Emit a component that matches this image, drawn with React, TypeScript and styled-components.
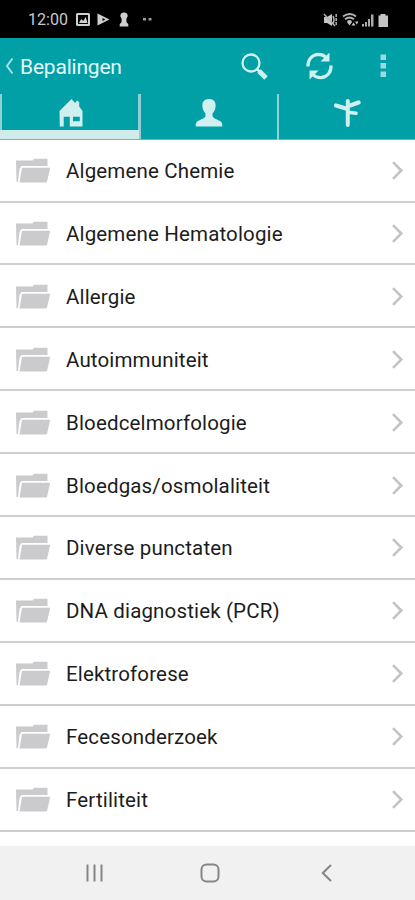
import React from 'react';
import styled, { createGlobalStyle, css } from 'styled-components';

const GlobalStyle = createGlobalStyle`
  * { box-sizing: border-box; }
  body { margin: 0; background: #fff; font-family: Roboto, sans-serif; }
`;

const TEAL = '#00a0a6';
const PALE = '#d0f0f0';
const DIVIDER = '#8fd0d2';

const Screen = styled.div`
  width: 415px;
  height: 900px;
  display: flex;
  flex-direction: column;
  overflow: hidden;
  background: #fff;
`;

const StatusBar = styled.header`
  height: 38px;
  flex: none;
  display: flex;
  align-items: center;
  justify-content: space-between;
  padding: 2px 26px 0 28px;
  background: #000;
  color: #c9c9c9;
`;

const Clock = styled.span`
  width: 48px;
  font-size: 16px;
  letter-spacing: 0.05px;
  line-height: 20px;
`;

const StatusGroup = styled.div`
  display: flex;
  align-items: center;
`;

const Glyph = styled.svg`
  display: block;
  flex: none;
  overflow: visible;
`;

const TitleBar = styled.div`
  height: 56px;
  flex: none;
  display: flex;
  align-items: center;
  padding: 0 28px 0 5px;
  background: ${TEAL};
`;

const Title = styled.h1`
  flex: 1;
  margin: 0 0 0 6px;
  padding-top: 2px;
  font-size: 21px;
  font-weight: 400;
  line-height: 28px;
  letter-spacing: -0.2px;
  color: #e4fafa;
`;

const Actions = styled.div`
  display: flex;
  align-items: center;
`;

const ActionButton = styled.button<{ $gap?: number }>`
  display: block;
  border: 0;
  padding: 0;
  margin-left: ${({ $gap = 0 }) => $gap}px;
  background: none;
`;

const Tabs = styled.nav`
  height: 46px;
  flex: none;
  display: grid;
  grid-template-columns: 141px 138px 136px;
  background: ${TEAL};
`;

const activeTab = css`
  border-right: 0;
  background:
    linear-gradient(transparent 36px, #cfeceb 36px) 0 0 / 139px 100% no-repeat,
    linear-gradient(90deg, ${DIVIDER} 2px, ${TEAL} 2px, ${TEAL} 138px, ${DIVIDER} 138px);
`;

const Tab = styled.button<{ $active?: boolean }>`
  display: flex;
  justify-content: center;
  align-items: flex-start;
  padding: 4px 0 0;
  border: 0;
  border-right: 2px solid ${DIVIDER};
  background: ${TEAL};
  box-shadow: inset 0 -1px #5fbcc0;
  ${({ $active }) => $active && activeTab}
  &:last-child { border-right: 0; }
`;

const List = styled.ul`
  flex: 1;
  min-height: 0;
  margin: 0;
  padding: 0;
  overflow: hidden;
  list-style: none;
`;

const Row = styled.li`
  height: 62.9px;
  display: flex;
  align-items: center;
  padding: 2px 11px 0 16px;
  border-bottom: 2px solid #cfcfcf;
  &:first-child { height: 62.6px; }
`;

const Label = styled.span`
  flex: 1;
  margin-left: 16px;
  font-size: 20.5px;
  line-height: 28px;
  letter-spacing: 0.15px;
  color: #1c1c1c;
  white-space: nowrap;
`;

const NavBar = styled.footer`
  height: 54px;
  flex: none;
  display: grid;
  grid-template-columns: 114px 121px 1fr;
  align-items: center;
  padding: 0 0 0 86px;
  background: #f1f1f1;
`;

const rows = [
  'Algemene Chemie',
  'Algemene Hematologie',
  'Allergie',
  'Autoimmuniteit',
  'Bloedcelmorfologie',
  'Bloedgas/osmolaliteit',
  'Diverse punctaten',
  'DNA diagnostiek (PCR)',
  'Elektroforese',
  'Fecesonderzoek',
  'Fertiliteit',
];

const NotificationIcons = () => (
  <Glyph width="78" height="16" viewBox="0 0 78 16" fill="#cfcfcf">
    <path fillRule="evenodd" d="M1.500 1h11q1.500 0 1.500 1.500v10q0 1.500-1.500 1.500h-11Q0 14 0 12.500v-10Q0 1 1.500 1ZM2 3v9h10V3ZM3 11l2.200-4 2 2 2.500-4L11.500 11Z" />
    <path fillRule="evenodd" d="M21.500 1.500 33.500 7.500 21.500 13.500ZM26.500 6v3l3-1.500Z" />
    <path d="M45 1.500q3-2 6 0l.8 2.500-1.500 3 .3 3.500 1.700 1.500v2.500h-8.600V12l1.700-1.500.3-3.500-1.500-3Z" />
    <rect x="67" y="6" width="3" height="2.500" fill="#999" />
    <rect x="72.500" y="6" width="3" height="2.500" fill="#999" />
  </Glyph>
);

const DeviceIcons = () => (
  <Glyph width="65" height="15" viewBox="0 0 65 15" fill="#c4c4c4">
    <path d="M0 4h3l5-3v12l-5-3H0Z" />
    <path d="m0 1 11 12M9 3q2 4 0 8" fill="none" stroke="#b0b0b0" strokeWidth="1.500" />
    <path d="M12.200 1v12" fill="none" stroke="#b0b0b0" strokeWidth="1.500" strokeDasharray="3 1" />
    <path d="M19 3.500q7-5 13 0M21 6.200q4.500-3.500 9 0M23.500 9q2-2 4 0" fill="none" stroke="#b5b5b5" strokeWidth="1.800" />
    <path d="m23 9 2.500 3.500L28 9ZM27.500 12.500l2-3 2 3ZM31 8.500h3.500l-1.700 3Z" />
    <path d="M38 11h2v2.500h-2ZM41 9h2v4.500h-2ZM44 6h2v7.500h-2ZM47 1.500h2.500v12H47Z" fill="#a9a9a9" />
    <path d="M54.500 2.500h2V1h5v1.500h2.500v11.500h-9.500Z" />
  </Glyph>
);

const BackIcon = () => (
  <Glyph width="9" height="18" viewBox="0 0 9 18" fill="none" stroke="#a5dfe1" strokeWidth="2">
    <path d="M7.500 1.500 2 9 7.500 16.500" />
  </Glyph>
);

const SearchIcon = () => (
  <Glyph width="27" height="27" viewBox="0 0 27 27" fill="none" stroke={PALE}>
    <circle cx="10" cy="10" r="8.500" strokeWidth="2.300" />
    <path d="m16 16 3 3" strokeWidth="2.500" />
    <path d="m18 18 7 7" strokeWidth="5" />
  </Glyph>
);

const RefreshIcon = () => (
  <Glyph width="27" height="28" viewBox="0 0 27 28" fill="none" stroke={PALE} strokeWidth="3.200">
    <path d="M2 14.500C1.500 8 6 2.500 12.500 2.300c3 0 5.500 1 7.500 3M25 13.500C25.500 20 21 25.500 14.500 25.700c-3 0-5.500-1-7.500-3" />
    <path d="M23.500.5v9h-9ZM3.500 27.500v-9h9Z" fill={PALE} stroke="none" />
  </Glyph>
);

const MoreIcon = () => (
  <Glyph width="7" height="24" viewBox="0 0 7 24" fill="#9cdcde">
    <path d="M.5.500H6V6H.5ZM.5 9H6v5.500H.5ZM.5 17.500H6V23H.5Z" />
  </Glyph>
);

const HomeIcon = () => (
  <Glyph width="24" height="30" viewBox="0 0 24 30" fill={PALE}>
    <path fillRule="evenodd" d="M.5 13 12.500 1l3.500 4 2-2.500 2.200 1.500V8.500L23.500 13v15.500H10.800V18.800H4.700v9.700H.8ZM14 18.800v4.500h6.800v-4.500Z" />
  </Glyph>
);

const PersonIcon = () => (
  <Glyph width="28" height="30" viewBox="0 0 28 30" fill={PALE}>
    <path d="M14 1c5 0 7 3.200 6.600 7.500-.3 3-1.400 5.300-3.100 7v2.700c1 2.500 5.500 3.300 8 5.100 1.500 1.100 1.800 3 1.800 5.200H.7c0-2.200.3-4.100 1.800-5.200 2.500-1.800 7-2.600 8-5.100v-2.700c-1.700-1.700-2.800-4-3.100-7C7 4.200 9 1 14 1Z" />
  </Glyph>
);

const SignpostIcon = () => (
  <Glyph width="28" height="30" viewBox="0 0 28 30" fill="none" stroke={PALE} strokeLinecap="round">
    <path d="M14.800 3v24" strokeWidth="4" />
    <path d="m3 7.500 10 3" strokeWidth="4.200" />
    <path d="m17 7.500 8.500-3" strokeWidth="4.500" />
    <path d="m17 14.500 6 .8" strokeWidth="3.600" />
  </Glyph>
);

const FolderIcon = () => (
  <Glyph width="34" height="26" viewBox="0 0 34 26" fill="#cbcbcd">
    <path d="M0 2.500h16.500L18 .8h13.500V8H5.500L3.500 11 2 24H.5Z" />
    <path d="M6 9.800h27.500q.8 0 .5 1l-3 13q-.2.700-1 .7H3.500Z" />
  </Glyph>
);

const ChevronIcon = () => (
  <Glyph width="12" height="20" viewBox="0 0 12 20" fill="none" stroke="#c4c4c4" strokeWidth="2.600">
    <path d="m1 1.200 8.300 8.300L1 17.800" />
  </Glyph>
);

const RecentsIcon = () => (
  <Glyph width="17" height="18" viewBox="0 0 17 18" stroke="#858585" strokeWidth="2">
    <path d="M1.500.5v17M8.500.5v17M15.500.5v17" />
  </Glyph>
);

const HomeKeyIcon = () => (
  <Glyph width="20" height="20" viewBox="0 0 20 20" fill="none" stroke="#858585" strokeWidth="2">
    <rect x="1.500" y="1.500" width="17" height="17" rx="5" />
  </Glyph>
);

const BackKeyIcon = () => (
  <Glyph width="11" height="18" viewBox="0 0 11 18" fill="none" stroke="#858585" strokeWidth="2">
    <path d="M10 1 1.800 9 10 17" />
  </Glyph>
);

export default function App() {
  return (
    <Screen>
      <GlobalStyle />
      <StatusBar>
        <StatusGroup>
          <Clock>12:00</Clock>
          <NotificationIcons />
        </StatusGroup>
        <DeviceIcons />
      </StatusBar>
      <TitleBar>
        <BackIcon />
        <Title>Bepalingen</Title>
        <Actions>
          <ActionButton aria-label="Zoeken"><SearchIcon /></ActionButton>
          <ActionButton $gap={38} aria-label="Vernieuwen"><RefreshIcon /></ActionButton>
          <ActionButton $gap={47} aria-label="Meer"><MoreIcon /></ActionButton>
        </Actions>
      </TitleBar>
      <Tabs>
        <Tab $active aria-label="Start"><HomeIcon /></Tab>
        <Tab aria-label="Profiel"><PersonIcon /></Tab>
        <Tab aria-label="Wegwijzer"><SignpostIcon /></Tab>
      </Tabs>
      <List>
        {rows.map((name) => (
          <Row key={name}>
            <FolderIcon />
            <Label>{name}</Label>
            <ChevronIcon />
          </Row>
        ))}
      </List>
      <NavBar>
        <RecentsIcon />
        <HomeKeyIcon />
        <BackKeyIcon />
      </NavBar>
    </Screen>
  );
}
